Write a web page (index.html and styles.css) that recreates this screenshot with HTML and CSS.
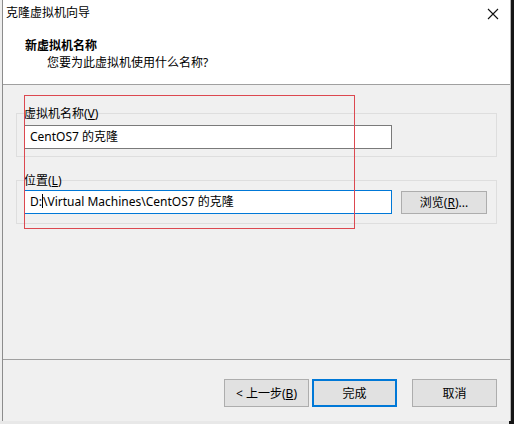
FILE: index.html
```html
<!DOCTYPE html>
<html lang="zh-CN">
<head>
<meta charset="utf-8">
<title>克隆虚拟机向导</title>
<link rel="stylesheet" href="styles.css">
</head>
<body>
<div class="win">
  <div class="titlebar">
    <span class="title">克隆虚拟机向导</span>
    <svg class="close" width="12" height="12" viewBox="0 0 12 12"><path d="M1 1L11 11M11 1L1 11" stroke="#111" stroke-width="1.1" fill="none"/></svg>
  </div>
  <div class="header">
    <div class="h-title">新虚拟机名称</div>
    <div class="h-sub">您要为此虚拟机使用什么名称?</div>
  </div>
  <div class="content">
    <div class="group">
      <div class="label">虚拟机名称(<u>V</u>)</div>
      <div class="row">
        <div class="field">CentOS7 的克隆</div>
      </div>
    </div>
    <div class="group g2">
      <div class="label">位置(<u>L</u>)</div>
      <div class="row">
        <div class="field focus">D:<span class="caret"></span>\Virtual Machines\CentOS7 的克隆</div>
        <button class="btn browse">浏览(<u>R</u>)...</button>
      </div>
    </div>
    <div class="mark"></div>
  </div>
  <div class="footer">
    <button class="btn big">&lt; 上一步(<u>B</u>)</button>
    <button class="btn big default">完成</button>
    <button class="btn big cancel">取消</button>
  </div>
</div>
</body>
</html>
```

FILE: styles.css
```css
html, body {
  margin: 0;
  padding: 0;
  background: #151515;
}
body {
  font-family: "Noto Sans", "Noto Sans CJK SC", sans-serif;
  font-size: 12px;
  color: #000;
  width: 514px;
  height: 424px;
  overflow: hidden;
}
.win {
  margin-left: 2px;
  width: 507px;
  height: 421px;
  background: #f0f0f0;
  border-left: 1px solid #8c8c8c;
  border-right: 1px solid #b5b5b5;
  box-shadow: -2px 0 0 #eeeeee, -2px 3px 0 #e8e8e8;
  display: flex;
  flex-direction: column;
}
.titlebar {
  height: 30px;
  background: #fff;
  display: flex;
  align-items: center;
  justify-content: space-between;
  padding: 0 11px 4px 3px;
  box-sizing: border-box;
}
.title { line-height: 16px; }
.close { display: block; margin-top: 2px; }
.header {
  background: #fff;
  height: 46px;
  border-bottom: 1px solid #a0a0a0;
  padding: 8px 0 0 22px;
}
.h-title { font-weight: bold; line-height: 16px; }
.h-sub { padding-left: 22px; margin-top: 1px; line-height: 16px; }
.content {
  position: relative;
  flex: 1;
  padding: 28px 13px 0 13px;
  border-bottom: 1px solid #a0a0a0;
}
.group {
  border: 1px solid #dedede;
  padding: 0 7px 7px 7px;
}
.g2 { margin-top: 23px; padding-bottom: 9px; }
.label {
  line-height: 16px;
  margin-top: -8px;
  margin-bottom: 3px;
}
.g2 .label { margin-bottom: 1px; }
.row { display: flex; align-items: center; gap: 9px; }
.field {
  width: 368px;
  height: 24px;
  box-sizing: border-box;
  background: #fff;
  border: 1px solid #7a7a7a;
  padding: 0 5px;
  line-height: 22px;
  white-space: nowrap;
}
.field.focus { border-color: #0078d7; }
.caret {
  display: inline-block;
  width: 1px;
  height: 14px;
  background: #000;
  vertical-align: -2px;
}
.btn {
  font-family: inherit;
  font-size: 12px;
  color: #000;
  background: #e1e1e1;
  border: 1px solid #adadad;
  padding: 0;
  margin: 0;
  box-sizing: border-box;
}
.browse { width: 86px; height: 23px; }
.mark {
  position: absolute;
  left: 21px;
  top: 10px;
  width: 329px;
  height: 132px;
  border: 1px solid #dc4850;
  pointer-events: none;
}
.footer {
  height: 61px;
  display: flex;
  align-items: flex-start;
  padding: 19px 0 0 221px;
  box-sizing: border-box;
}
.big { width: 85px; height: 28px; }
.default { margin-left: 3px; border: 2px solid #0078d7; }
.cancel { margin-left: 15px; }
```
